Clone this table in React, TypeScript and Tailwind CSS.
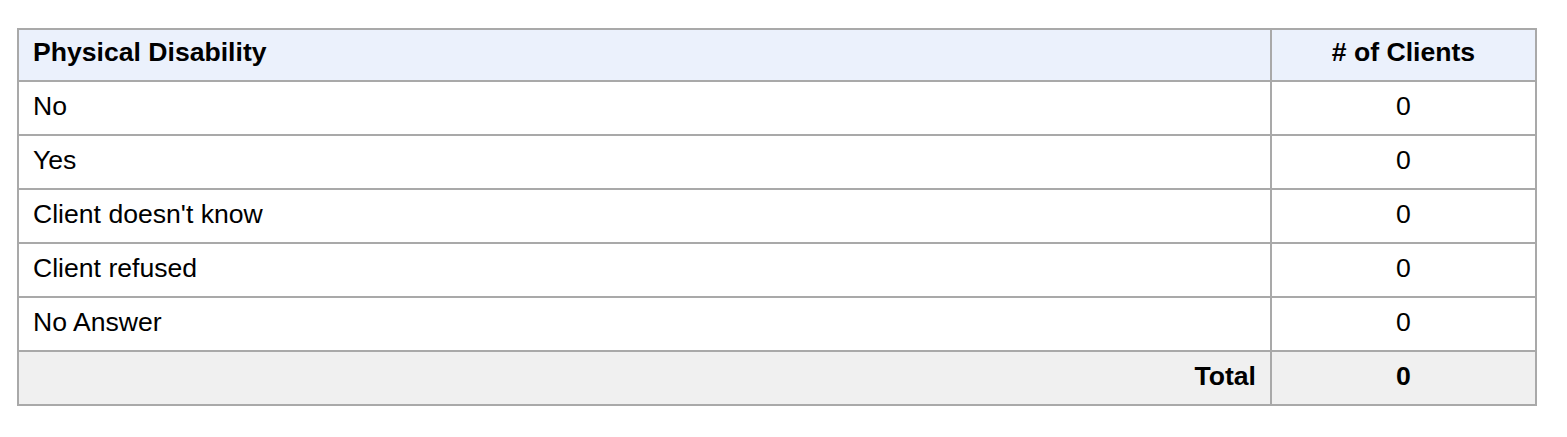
import React from 'react';

type Row = {
    label: string;
    count: number;
};

const rows: Row[] = [
    { label: 'No', count: 0 },
    { label: 'Yes', count: 0 },
    { label: "Client doesn't know", count: 0 },
    { label: 'Client refused', count: 0 },
    { label: 'No Answer', count: 0 },
];

export default function App() {
    const total = rows.reduce((sum, r) => sum + r.count, 0);

    return (
        <div className="bg-white pl-[17px] pt-[28px] pr-[30px] pb-[31px] font-['Liberation_Sans',Arial,sans-serif] text-[26.6px] text-black">
            <table className="w-[1520px] border-collapse border-2 border-[#a9a9a9]">
                <thead>
                    {/* Header */}
                    <tr className="h-[52px] bg-[#ebf1fc]">
                        <th className="border-2 border-[#a9a9a9] px-[14px] pb-[5px] text-left font-bold leading-none">
                            Physical Disability
                        </th>
                        <th className="w-[265px] border-2 border-[#a9a9a9] px-[14px] pb-[5px] text-center font-bold leading-none">
                            # of Clients
                        </th>
                    </tr>
                </thead>
                <tbody>
                    {rows.map((row) => (
                        <tr key={row.label} className="h-[54px] bg-white">
                            <td className="border-2 border-[#a9a9a9] px-[14px] pb-[4px] leading-none">{row.label}</td>
                            <td className="border-2 border-[#a9a9a9] px-[14px] pb-[4px] text-center leading-none">{row.count}</td>
                        </tr>
                    ))}
                    {/* Total */}
                    <tr className="h-[54px] bg-[#f0f0f0]">
                        <td className="border-2 border-[#a9a9a9] px-[14px] pb-[4px] text-right font-bold leading-none">Total</td>
                        <td className="border-2 border-[#a9a9a9] px-[14px] pb-[4px] text-center font-bold leading-none">{total}</td>
                    </tr>
                </tbody>
            </table>
        </div>
    );
}
